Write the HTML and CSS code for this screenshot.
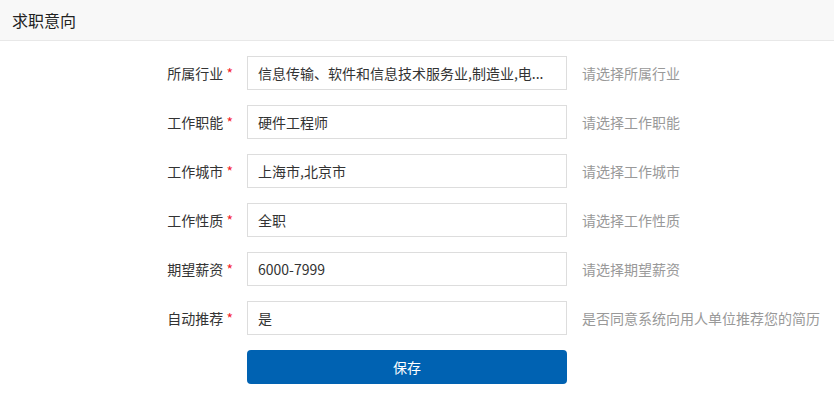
FILE: index.html
```html
<!DOCTYPE html>
<html lang="zh-CN">
<head>
  <meta charset="UTF-8" />
  <meta name="viewport" content="width=device-width, initial-scale=1.0" />
  <title>求职意向</title>
  <link rel="stylesheet" href="styles.css">
</head>
<body>
  <div class="header">求职意向</div>

  <form class="form">
    <div class="row">
      <label class="label">所属行业 <span class="req">*</span></label>
      <div class="field">信息传输、软件和信息技术服务业,制造业,电...</div>
      <span class="hint">请选择所属行业</span>
    </div>
    <div class="row">
      <label class="label">工作职能 <span class="req">*</span></label>
      <div class="field">硬件工程师</div>
      <span class="hint">请选择工作职能</span>
    </div>
    <div class="row">
      <label class="label">工作城市 <span class="req">*</span></label>
      <div class="field">上海市,北京市</div>
      <span class="hint">请选择工作城市</span>
    </div>
    <div class="row">
      <label class="label">工作性质 <span class="req">*</span></label>
      <div class="field">全职</div>
      <span class="hint">请选择工作性质</span>
    </div>
    <div class="row">
      <label class="label">期望薪资 <span class="req">*</span></label>
      <div class="field">6000-7999</div>
      <span class="hint">请选择期望薪资</span>
    </div>
    <div class="row">
      <label class="label">自动推荐 <span class="req">*</span></label>
      <div class="field">是</div>
      <span class="hint">是否同意系统向用人单位推荐您的简历</span>
    </div>
    <div class="row">
      <span class="label"></span>
      <button type="button" class="save">保存</button>
    </div>
  </form>
</body>
</html>
```

FILE: styles.css
```css
body {
  margin: 0;
  font-family: "Noto Sans CJK SC", "Noto Sans", sans-serif;
  font-size: 14px;
  color: #333;
  background: #fff;
}
.header {
  height: 40px;
  line-height: 40px;
  padding: 0 12px;
  font-size: 16px;
  color: #222;
  background: #f8f8f8;
  border-bottom: 1px solid #e8e8e8;
}
.form {
  display: flex;
  flex-direction: column;
  gap: 15px;
  padding-top: 15px;
}
.row {
  display: flex;
  align-items: center;
}
.label {
  flex: none;
  width: 247px;
  padding-right: 14px;
  box-sizing: border-box;
  text-align: right;
  color: #333;
}
.req {
  color: #f5222d;
}
.field {
  flex: none;
  width: 320px;
  height: 34px;
  box-sizing: border-box;
  border: 1px solid #ddd;
  padding: 0 10px;
  line-height: 32px;
  color: #333;
  white-space: nowrap;
  overflow: hidden;
}
.hint {
  margin-left: 15px;
  color: #999;
  white-space: nowrap;
}
.save {
  flex: none;
  width: 320px;
  height: 34px;
  border: none;
  border-radius: 4px;
  background-color: #0062b2;
  color: #fff;
  font-family: inherit;
  font-size: 14px;
  cursor: pointer;
}
```
